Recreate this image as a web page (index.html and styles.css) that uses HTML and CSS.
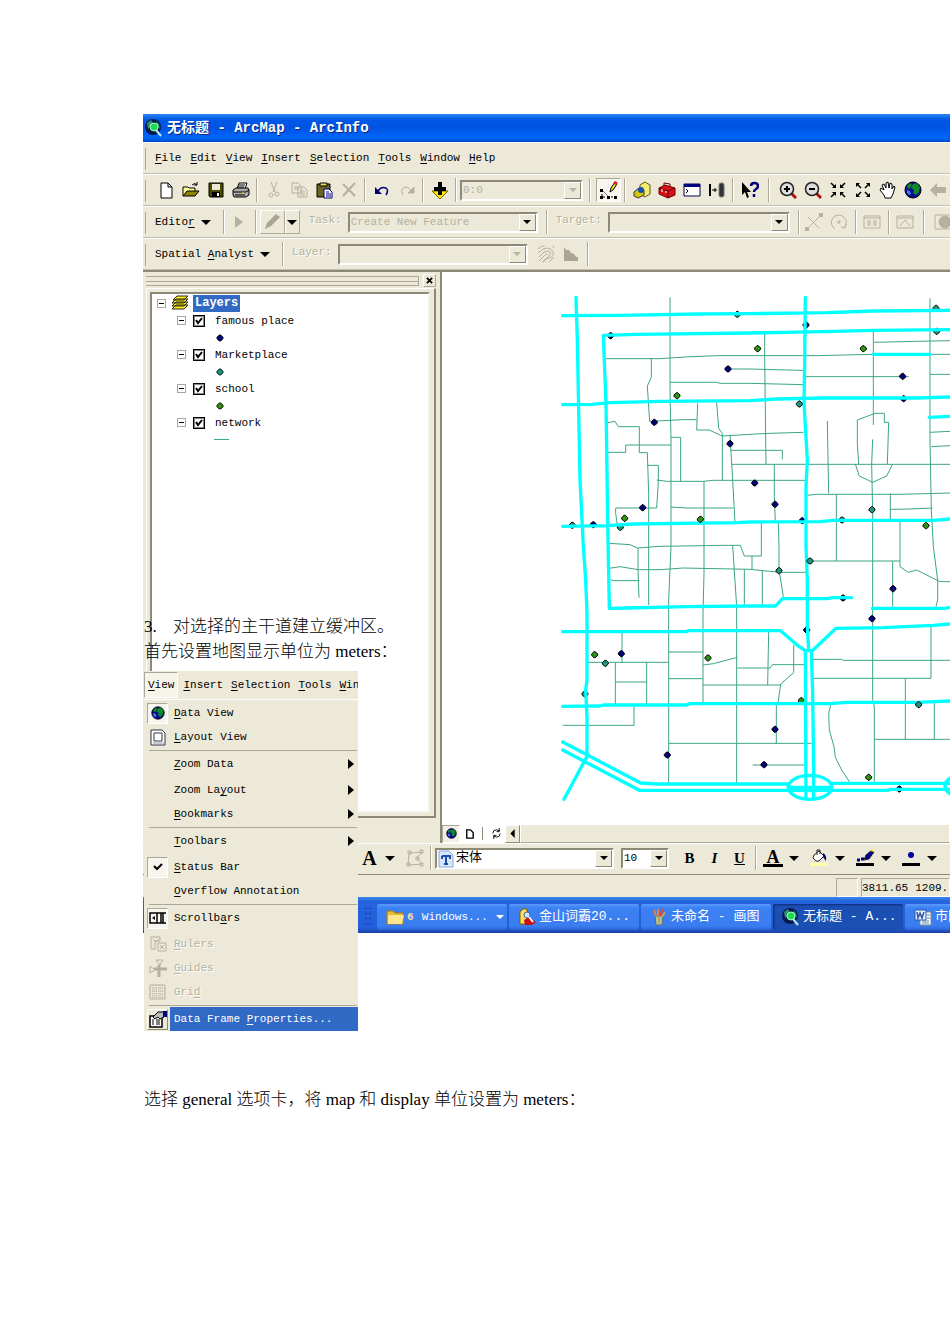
FILE: index.html
```html
<!DOCTYPE html>
<html lang="zh-CN">
<head>
<meta charset="utf-8">
<title>无标题 - ArcMap - ArcInfo</title>
<link rel="stylesheet" href="styles.css">
</head>
<body>
<svg class="defs" aria-hidden="true">
  <symbol id="globe" viewBox="0 0 18 18"><circle cx="9" cy="9" r="8" fill="#0a0a8c" stroke="#000"/><path d="M3 5l3-3 2 2-2 3-2 1zM9 3l4-1 3 4-1 5-3 3-3-2 1-3-3-2z" fill="#0c8a28"/><path d="M3 9l3 1 1 3-2 1-2-2z" fill="#3a7cf0"/></symbol>
  <symbol id="arcmap" viewBox="0 0 18 18"><circle cx="8" cy="8" r="8" fill="#061a4e"/><path d="M2 4l4-3 2 3-3 4-2 2zM11 2l3 3 1 5-3-2z" fill="#2b8f6a"/><circle cx="9" cy="8" r="4" fill="#1edc4e" stroke="#9fc" stroke-width="1"/><path d="M11 11l5 6" stroke="#bfe8f0" stroke-width="2"/></symbol>
  <symbol id="dia" viewBox="-12 -12 24 24" overflow="visible"><path d="M-2-9h4l7 7v4l-7 7h-4l-7-7v-4z"/></symbol>
</svg>
<article class="doc">
  <div class="stack">
    <figure class="shot">
      <header class="title"><svg class="i18"><use href="#arcmap"/></svg><span>无标题 - ArcMap - ArcInfo</span></header>

      <nav class="bar menubar">
        <button><u>F</u>ile</button><button><u>E</u>dit</button><button><u>V</u>iew</button><button><u>I</u>nsert</button><button><u>S</u>election</button><button><u>T</u>ools</button><button><u>W</u>indow</button><button><u>H</u>elp</button>
      </nav>

      <div class="bar tools">
        <button class="tb" aria-label="New"><svg viewBox="0 0 18 18"><path d="M4 2h7l4 4v11H4z" fill="#fff" stroke="#000"/><path d="M11 2v4h4" fill="none" stroke="#000"/></svg></button>
        <button class="tb" aria-label="Open"><svg viewBox="0 0 18 18"><path d="M1 15V6h5l1 1h6v3" fill="#ffff9c" stroke="#000"/><path d="M1 15l4-5h12l-4 5z" fill="#8c8400" stroke="#000"/><path d="M10 4q3-3 5 0m0-3v3h-3" fill="none" stroke="#000"/></svg></button>
        <button class="tb" aria-label="Save"><svg viewBox="0 0 18 18"><path d="M2 2h14v14H3l-1-1z" fill="#4a4a00" stroke="#000"/><path d="M5 3h8v6H5z" fill="#e8e8d8"/><path d="M5 11h8v5H5z" fill="#000"/><path d="M10 12h2v3h-2z" fill="#fff"/></svg></button>
        <button class="tb" aria-label="Print"><svg viewBox="0 0 18 18"><path d="M5 8l2-6h8l-2 6z" fill="#fff" stroke="#000"/><path d="M7 4h6M6 6h6" stroke="#000"/><path d="M1 9l3-2h12l1 2v5l-3 2H2l-1-2z" fill="#aaa" stroke="#000"/><path d="M1 11h13l3-2M3 14h10" stroke="#000" fill="none"/><path d="M10 12h2" stroke="#ee0"/></svg></button>
        <i class="sep"></i>
        <button class="tb off" aria-label="Cut"><svg viewBox="0 0 18 18"><path d="M6 1l4 10M12 1L8 11" /><circle cx="6" cy="14" r="2"/><circle cx="12" cy="13" r="2"/></svg></button>
        <button class="tb off" aria-label="Copy"><svg viewBox="0 0 18 18"><path d="M2 2h6l3 3v7H2zM4 6h5M4 8h5M8 6h6l3 3v7H8zM10 10h5M10 12h5M10 14h5"/></svg></button>
        <button class="tb" aria-label="Paste"><svg viewBox="0 0 18 18"><path d="M2 3h13v13H2z" fill="#6a6420" stroke="#000"/><path d="M5 2h7v3H5z" fill="#dd5" stroke="#000"/><path d="M9 8h5l3 3v6H9z" fill="#fff" stroke="#00007b"/><path d="M11 11h3M11 13h5M11 15h5" stroke="#00007b"/></svg></button>
        <button class="tb off" aria-label="Delete"><svg viewBox="0 0 18 18"><path d="M3 3l12 12M15 2L3 15" stroke-width="2"/></svg></button>
        <i class="sep"></i>
        <button class="tb" aria-label="Undo"><svg viewBox="0 0 18 18"><path d="M5 10q3-5 8-3 3 2 0 7" fill="none" stroke="#00007b" stroke-width="1.500"/><path d="M2 6v7h7z" fill="#00007b"/></svg></button>
        <button class="tb off" aria-label="Redo"><svg viewBox="0 0 18 18"><path d="M13 10Q9 4 5 7q-3 3 0 7" /><path d="M16 6v6h-6z" fill="#b4b1a0"/></svg></button>
        <i class="sep"></i>
        <button class="tb" aria-label="Add data"><svg viewBox="0 0 18 18"><path d="M1 10h16l-8 8z" fill="#ffe800" stroke="#776600"/><path d="M9 1v13M3 8h12" stroke="#000" stroke-width="4"/></svg></button>
        <i class="sep"></i>
        <span class="combo w123 off"><select aria-label="Scale" disabled><option>0:0</option></select><b></b></span>
        <i class="sep grip2"></i>
        <button class="tb pressed" aria-label="Editor toolbar"><svg viewBox="0 0 18 18"><path d="M2 9v7h14" fill="none" stroke="#000" stroke-dasharray="2 2"/><path d="M2 9l6 6" stroke="#777"/><path d="M0 8h3v3H0zM0 15h3v3H0zM7 15h3v3H7zM14 15h3v3h-3z" fill="#000"/><path d="M10 11l1-4 4-6 2 2-4 6z" fill="#f4e020" stroke="#000"/><path d="M14 1l3 2" stroke="#d22" stroke-width="3"/></svg></button>
        <i class="sep"></i>
        <button class="tb" aria-label="ArcCatalog"><svg viewBox="0 0 18 18"><path d="M7 4l5-3 5 3v9l-5 3-5-3z" fill="#f4ec70" stroke="#665c00"/><path d="M1 11l5-4 5 2v5l-6 3-4-2z" fill="#d7c500" stroke="#333"/><circle cx="8" cy="9" r="3" fill="#1550b0"/></svg></button>
        <button class="tb" aria-label="ArcToolbox"><svg viewBox="0 0 18 18"><path d="M1 7l6-3 10 3v7l-7 3-9-4z" fill="#d8111b" stroke="#700"/><path d="M1 7l9 3 7-3M10 10v7M6 5V2l6 1v3" fill="none" stroke="#600"/><path d="M4 8v3M8 10v2" stroke="#fff"/></svg></button>
        <button class="tb" aria-label="Command line"><svg viewBox="0 0 18 18"><path d="M1 3h16v12H1z" fill="#fff" stroke="#00005a"/><path d="M1 3h16v3H1z" fill="#00007b"/><path d="M3 8l2 2-2 2" fill="none" stroke="#000"/></svg></button>
        <button class="tb" aria-label="Snap"><svg viewBox="0 0 18 18"><path d="M2 3v12" stroke="#000" stroke-width="2"/><path d="M4 9h5M7 7v4" stroke="#000"/><rect x="11" y="2" width="5" height="14" rx="2" fill="#333" stroke="#777"/></svg></button>
        <i class="sep"></i>
        <button class="tb" aria-label="What's this"><svg viewBox="0 0 18 18"><path d="M1 1v13l3-3 2 6 2-1-2-5h4z" fill="#000"/><path d="M10 5q0-3 3.500-3T17 5q0 2-2 3t-2 3M13 13v3" fill="none" stroke="#00007b" stroke-width="2.500"/></svg></button>
        <i class="sep grip2"></i>
        <button class="tb" aria-label="Zoom in"><svg viewBox="0 0 18 18"><path d="M12 12l5 5" stroke="#b01010" stroke-width="3"/><circle cx="8" cy="8" r="6.500" fill="#ddd" stroke="#222" stroke-width="1.500"/><path d="M8 5v6M5 8h6" stroke="#000" stroke-width="2"/></svg></button>
        <button class="tb" aria-label="Zoom out"><svg viewBox="0 0 18 18"><path d="M12 12l5 5" stroke="#b01010" stroke-width="3"/><circle cx="8" cy="8" r="6.500" fill="#ddd" stroke="#222" stroke-width="1.500"/><path d="M5 8h6" stroke="#000" stroke-width="2"/></svg></button>
        <button class="tb" aria-label="Fixed zoom in"><svg viewBox="0 0 18 18"><path d="M2 2l4 4M16 2l-4 4M2 16l4-4M16 16l-4-4" stroke="#000" stroke-width="1.500"/><path d="M7 3v4H3zM11 3v4h4zM7 15v-4H3zM11 15v-4h4z"/></svg></button>
        <button class="tb" aria-label="Fixed zoom out"><svg viewBox="0 0 18 18"><path d="M3 3l4 4M15 3l-4 4M3 15l4-4M15 15l-4-4" stroke="#000" stroke-width="1.500"/><path d="M2 2h4L2 6zM16 2h-4l4 4zM2 16h4l-4-4zM16 16h-4l4-4z"/></svg></button>
        <button class="tb" aria-label="Pan"><svg viewBox="0 0 18 18"><path d="M6 17l-1-3-4-5 1-2 3 2L3 4l2-1 2 4V2l2-1 1 6 1-5 2 1v5l2-3 1 1-2 7-2 4z" fill="#fff" stroke="#000"/></svg></button>
        <button class="tb" aria-label="Full extent"><svg><use href="#globe"/></svg></button>
        <button class="tb" aria-label="Back"><svg viewBox="0 0 18 18"><path d="M1 9l7-7v4h9v6H8v4z" fill="#b4b1a0"/></svg></button>
      </div>

      <div class="bar tools">
        <button class="drop"><span>Edito<u>r</u></span><b class="tri"></b></button>
        <i class="sep wide"></i>
        <button class="tb off" aria-label="Edit tool"><svg viewBox="0 0 18 18"><path d="M5 3v12l8-6z" fill="#b4b1a0" stroke="none"/></svg></button>
        <i class="sep"></i>
        <button class="tb off raised" aria-label="Sketch"><svg viewBox="0 0 18 18"><path d="M2 16l2-6 9-9 4 3-9 9z" fill="#a8a595" stroke="none"/></svg></button><button class="raised thin" aria-label="Sketch menu"><b class="tri"></b></button>
        <label class="lab" for="task">Task:</label>
        <span class="combo w190 grey"><select id="task"><option>Create New Feature</option></select><b></b></span>
        <i class="sep wide2"></i>
        <label class="lab" for="target">Target:</label>
        <span class="combo w182 grey"><select id="target"><option></option></select><b></b></span>
        <i class="sep wide2"></i>
        <button class="tb off" aria-label="Split"><svg viewBox="0 0 18 18"><path d="M2 16L16 2M3 4l11 11"/><path d="M0 14h4v4H0zM14 0h4v4h-4z" fill="#b4b1a0" stroke="none"/></svg></button>
        <button class="tb off" aria-label="Rotate"><svg viewBox="0 0 18 18"><path d="M5 16a7.500 7.500 0 1 1 9-1M16 11l-1 4-4-1M8 8h2v2H8z"/></svg></button>
        <i class="sep"></i>
        <button class="tb off" aria-label="Attributes"><svg viewBox="0 0 18 18"><path d="M1 3h16v12H1zM1 5h16M4 8h4M10 8h4M4 10h4M10 10h4M4 12h4M10 12h4"/></svg></button>
        <i class="sep"></i>
        <button class="tb off" aria-label="Sketch properties"><svg viewBox="0 0 18 18"><path d="M1 3h16v12H1zM1 5h16M4 13l5-6 5 6"/></svg></button>
        <i class="sep grip2"></i>
        <button class="tb off" aria-label="Topology"><svg viewBox="0 0 18 18"><path d="M1 2h16v14H1z"/><circle cx="11" cy="9" r="6" fill="#b4b1a0"/></svg></button>
      </div>

      <div class="bar tools last">
        <button class="drop"><span>Spatial <u>A</u>nalyst</span><b class="tri"></b></button>
        <i class="sep wide"></i>
        <label class="lab near" for="layer">Layer:</label>
        <span class="combo w190 off"><select id="layer" disabled><option></option></select><b></b></span>
        <button class="tb off lead" aria-label="Contour"><svg viewBox="0 0 18 18"><path d="M1 4q4-4 7-3M1 8q5-5 9-5t6 4-4 6-5 4M2 12l5-5q4-2 6 0t-2 5l-6 5M2 16l6-6q2-2 3 0M12 17l5-5M16 1l1 2"/></svg></button>
        <button class="tb off" aria-label="Histogram"><svg viewBox="0 0 18 18"><path d="M2 16V2l2 3h3l2 3 3 1 2 3h2v4z" fill="#a8a595" stroke="none"/></svg></button>
        <i class="sep"></i>
      </div>

      <div class="work">
        <aside class="toc">
          <div class="tochead"><span class="rails"></span><button class="close" aria-label="Close"><svg viewBox="0 0 8 8"><path d="M1 1l6 6M7 1L1 7" stroke="#000" stroke-width="2"/></svg></button></div>
          <div class="tocframe"><div class="tree">
            <div class="node root"><i class="pm"></i><svg class="i18" viewBox="0 0 18 18"><g fill="#ffee10" stroke="#222"><path d="M1 15l4-4h12l-4 4zM1 12l4-4h12l-4 4zM1 9l4-4h12l-4 4zM2 6l4-4h11l-4 4z"/></g></svg><strong>Layers</strong></div>
            <div class="node"><i class="pm"></i><input type="checkbox" id="l1" checked><label for="l1">famous place</label></div>
            <div class="sym"><svg viewBox="-12 -12 24 24"><use href="#dia" x="-12" y="-12" width="24" height="24" class="n"/></svg></div>
            <div class="node"><i class="pm"></i><input type="checkbox" id="l2" checked><label for="l2">Marketplace</label></div>
            <div class="sym"><svg viewBox="-12 -12 24 24"><use href="#dia" x="-12" y="-12" width="24" height="24" class="t"/></svg></div>
            <div class="node"><i class="pm"></i><input type="checkbox" id="l3" checked><label for="l3">school</label></div>
            <div class="sym"><svg viewBox="-12 -12 24 24"><use href="#dia" x="-12" y="-12" width="24" height="24" class="g"/></svg></div>
            <div class="node"><i class="pm"></i><input type="checkbox" id="l4" checked><label for="l4">network</label></div>
            <div class="sym"><i class="line"></i></div>
          </div></div>
        </aside>
        <section class="mapcol">
          <div class="map">
            <svg class="mapsvg" viewBox="-324 -24 1524 1656">
              <g class="street">
                <path d="M360 52V330L363 480V800L356 960V1508M168 236H330L405 231L500 227H800L970 223M304 236V292L292 318L299 424L400 419H440M360 307H500L510 310H600M534 267H600L750 271H760M600 310L760 314M443 370L440 450H478L516 468L600 463L660 460L760 457M500 368L506 445L517 460V600M540 466L548 600L555 728M541 511H697V538M546 553H1200M172 428L195 424L205 440H268V518H292L296 640V975M175 517H227V495H363M292 556H325V602L320 684H197V700L202 735M320 600L350 604H460L490 601H766M363 472H392V604M363 681L410 684H550M462 604V880L459 1000V1270M178 790L240 794L262 804L330 799L520 796H571L583 828H634V725M178 865L210 860L265 869H330L400 864L600 868L690 877H768M264 804V870L267 953M182 898L190 902H268M548 796L560 980V1508M583 868V975M685 725L687 800V870L700 950M637 872V975M606 828V868M644 162V230L648 552M673 552V650L676 725"/>
                <path d="M764 290H1076M970 155V435M970 187L1060 185L1100 184L1200 182M1140 223H1200M1140 283H1200M1140 55V480L1144 690L1150 800L1163 900V960L1158 980M1140 457L1200 454M1144 500L1200 497M832 423L836 640M968 478L965 552L968 700V1258L973 1280V1505M922 420L975 400H1003V427H1016L1012 552M922 420V490L926 552M916 552L928 588L968 607L1010 588L1028 552M772 646L800 643H1050L1200 639M859 643V843M1021 640V720M1021 688L1080 687L1147 684M1050 725V860L1075 877L1100 870L1170 905H1200M780 843H1050M1028 843V980"/>
                <path d="M216 1057V1147M111 1147H356M196 1147V1272M290 1147V1272M196 1206H290M356 1116H459M356 1196H459M459 1155L490 1151L562 1132M562 1164H660L667 1154H763M459 1215H694M38 1336H252V1280M356 1390H785M656 1055L653 1215M731 1095V1178L692 1212L684 1270M679 1275V1390M608 1455H765M787 1138H875L880 1141H1200M787 1195H1143V1040M1066 1196V1378M1153 1267V1378M973 1378H1200M842 1275L836 1300L838 1350L852 1400L856 1432L875 1470L898 1505"/>
              </g>
              <g class="road">
                <path d="M78 52L82 180L90 600L100 800L107 900L111 1000V1200L107 1230L111 1310V1430L104 1442L42 1558M38 107L210 106L442 102L600 101L830 98L970 93L1200 91M905 953L850 953L830 956H697L677 978H600L410 980L235 984L178 985L174 780L168 370L160 166L260 163L600 159L705 157L850 154L970 151L1200 149M38 374L125 373L180 368L330 364L600 362L680 357L820 354H1100L1200 351M970 223H1140M1138 412L1200 409M766 52L764 250L762 370L772 540L768 620V800L772 900V1040L776 1110M38 739L170 737L250 732L560 728L600 726L810 725L850 721H1150L1200 717"/>
                <path d="M38 1055H410L415 1052H692L735 1090L765 1112H787L858 1045L1000 1043L1150 1036L1200 1032M967 985H1185L1200 982M766 1112L768 1555M784 1112L788 1240L791 1460V1555M38 1279L150 1278L160 1275H410L420 1271H840L890 1267H1100L1200 1263M38 1386L272 1509L320 1512H715M845 1510H1200M38 1410L268 1531H1015L1020 1528H1200M715 1522H845"/>
                <ellipse cx="780" cy="1522" rx="65" ry="36"/><ellipse cx="1250" cy="1518" rx="65" ry="36"/>
              </g>
              <g class="pts"></g>
            </svg>
          </div>
          <div class="hscroll">
            <button class="sq on" aria-label="Data view"><svg viewBox="0 0 18 18"><use href="#globe"/></svg></button>
            <button class="sq" aria-label="Layout view"><svg viewBox="0 0 10 12"><path d="M2 2h4l3 3v6H2z" fill="#fff" stroke="#000" stroke-width="1.500"/></svg></button>
            <i class="vbar"></i>
            <button class="sq" aria-label="Refresh"><svg viewBox="0 0 12 12"><path d="M2 6q0-4 4-4l3 1M9 0v4H6M10 6q0 4-4 4l-3-1M3 12V8h3" fill="none" stroke="#000"/></svg></button>
            <button class="sq up" aria-label="Scroll left"><svg viewBox="0 0 10 10"><path d="M7 1v8L3 5z"/></svg></button>
            <i class="track"></i>
          </div>
        </section>
      </div>

      <div class="draw">
        <button class="ch big">A</button><b class="tri"></b>
        <button class="tb off nodes" aria-label="Edit vertices"><svg viewBox="0 0 18 18"><path d="M3 4l13-1-5 6 5 6-14 1zM1 14h3v3H1zM2 2h3v3H2zM14 1h3v3h-3zM14 14h3v3h-3zM10 8h3v3h-3z"/></svg></button>
        <i class="sep"></i>
        <span class="combo w179"><svg class="i18" viewBox="0 0 18 18"><path d="M2 1h10l4 4v12H2z" fill="#d8e6fb" stroke="#88a8dc"/><path d="M5 6h8v3M9 6v8M7 14h4M5 6v3" fill="none" stroke="#1b4fa8" stroke-width="2"/></svg><select class="cjk" aria-label="Font"><option>宋体</option></select><b></b></span>
        <span class="combo w48"><select aria-label="Size"><option>10</option></select><b></b></span>
        <button class="ch first">B</button><button class="ch it">I</button><button class="ch un">U</button>
        <i class="sep"></i>
        <button class="ch ink">A</button><b class="tri"></b>
        <button class="col" aria-label="Fill color"><svg viewBox="0 0 20 20"><path d="M5 7l5-4 5 5-5 5h-3l-3-3z" fill="#fff" stroke="#222"/><path d="M8 7V2h3v4" fill="none" stroke="#222"/><path d="M14 5q4 2 3 8l-3-4z" fill="#00008c"/><path d="M1 15h18v3H1z" fill="#ffffa8"/></svg></button><b class="tri"></b>
        <button class="col" aria-label="Line color"><svg viewBox="0 0 20 20"><path d="M2 12h3M6 11h3" stroke="#00007b" stroke-width="3"/><path d="M9 12l2-5 6-5 2 2-5 7z" fill="#00008c" stroke="#223"/><path d="M15 3l3-2 1 3z" fill="#ee2"/><path d="M1 15h18v3H1z"/></svg></button><b class="tri"></b>
        <button class="col" aria-label="Marker color"><svg viewBox="0 0 20 20"><circle cx="10" cy="7" r="3" fill="#0000a0"/><path d="M1 15h18v3H1z"/></svg></button><b class="tri"></b>
      </div>

      <div class="status"><span class="cell small"></span><span class="cell"><span>3811.65</span><span>1209.</span></span></div>

      <div class="taskbar">
        <i class="dots"></i>
        <button class="task"><svg class="i18" viewBox="0 0 18 18"><path d="M1 3h6l2 2h8v11H1z" fill="#e8b83c" stroke="#b07c10"/><path d="M2 7h16l-2 9H2z" fill="#ffe68c"/></svg><em>6</em><span class="lat">Windows...</span><b class="tri white"></b></button>
        <button class="task"><svg class="i18" viewBox="0 0 18 18"><path d="M2 16V4l3-3h4v15z" fill="#ffe060" stroke="#8a5a00"/><path d="M6 12l5-3 7 5-4 3H7z" fill="#d01010"/><circle cx="9" cy="7" r="3" fill="#cfe6ff" stroke="#469"/><path d="M11 9l4 5" stroke="#fff" stroke-width="2"/></svg><span>金山词霸20...</span></button>
        <button class="task"><svg class="i18" viewBox="0 0 18 18"><path d="M5 8h8l-1 9H6z" fill="#a9c7a0" stroke="#567"/><path d="M6 8L4 2M8 8V1" stroke="#e8803a" stroke-width="2"/><path d="M10 8l3-7" stroke="#d44" stroke-width="2"/><path d="M12 9l3-5M9 9v6" stroke="#c8a050" stroke-width="2"/></svg><span>未命名 - 画图</span></button>
        <button class="task active"><svg class="i18"><use href="#arcmap"/></svg><span>无标题 - A...</span></button>
        <button class="task"><svg class="i18" viewBox="0 0 18 18"><path d="M6 4h11v13H6z" fill="#fff" stroke="#789"/><path d="M8 13h7M8 15h7M13 7h3M13 10h3" stroke="#58a"/><path d="M1 2h11v10H1z" fill="#e8f0ff" stroke="#2a56a8"/><path d="M3 4l1 6 2-5 2 5 2-6" fill="none" stroke="#2a56a8" stroke-width="1.500"/></svg><span>市区</span></button>
      </div>
    </figure>

    <div class="over">
      <p class="num"><span>3.</span>对选择的主干道建立缓冲区。</p>
      <p>首先设置地图显示单位为 meters：</p>
      <div class="popup">
        <div class="pmenu"><button class="sel"><u>V</u>iew</button><button><u>I</u>nsert</button><button><u>S</u>election</button><button><u>T</u>ools</button><button><u>W</u>in</button></div>
        <div class="items">
          <button class="mi"><span class="ic chk"><svg class="small-globe"><use href="#globe"/></svg></span><span><u>D</u>ata View</span></button>
          <button class="mi"><span class="ic"><svg viewBox="0 0 18 18"><path d="M2 2h11l3 3v12H2z" fill="#fff" stroke="#334"/><path d="M5 5h8v8H5z" fill="#fff" stroke="#334"/><path d="M4 15h11" stroke="#99a"/></svg></span><span><u>L</u>ayout View</span></button>
          <hr>
          <button class="mi sp"><span class="ic"></span><span><u>Z</u>oom Data</span><i class="sub"></i></button>
          <button class="mi"><span class="ic"></span><span>Zoom La<u>y</u>out</span><i class="sub"></i></button>
          <button class="mi"><span class="ic"></span><span><u>B</u>ookmarks</span><i class="sub"></i></button>
          <hr>
          <button class="mi sp"><span class="ic"></span><span><u>T</u>oolbars</span><i class="sub"></i></button>
          <button class="mi"><span class="ic chk"><svg viewBox="0 0 18 18"><path d="M5 8l3 3 5-5" fill="none" stroke="#000" stroke-width="2"/></svg></span><span><u>S</u>tatus Bar</span></button>
          <button class="mi"><span class="ic"></span><span><u>O</u>verflow Annotation</span></button>
          <hr>
          <button class="mi sp"><span class="ic chk"><svg viewBox="0 0 18 18"><path d="M1 4h7v10H1zM8 4h4v10H8zM14 4v10M12 4h5M12 14h5" fill="none" stroke="#000" stroke-width="1.500"/><path d="M6 7v4L3 9z"/></svg></span><span>Scrollb<u>a</u>rs</span></button>
          <button class="mi dis"><span class="ic"><svg viewBox="0 0 18 18"><path d="M2 2h9v4H6v8H2zM4 4l3 3 3-3M9 8h8v8H9zM11 10l4 4M15 10l-4 4"/></svg></span><span><u>R</u>ulers</span></button>
          <button class="mi dis"><span class="ic"><svg viewBox="0 0 18 18"><path d="M7 1h7l-3 5zM1 7v7l5-3z"/><path d="M10 6v12M5 10h13" stroke-width="3"/></svg></span><span><u>G</u>uides</span></button>
          <button class="mi dis"><span class="ic"><svg viewBox="0 0 18 18"><path d="M1 2h15v14H1z"/><path d="M4 2v14M7 2v14M10 2v14M13 2v14M1 5h15M1 8h15M1 11h15M1 14h15" stroke-dasharray="1 1"/></svg></span><span>Gri<u>d</u></span></button>
          <hr>
          <button class="mi hot"><span class="ic"><svg viewBox="0 0 18 18"><path d="M1 6h12v11H1z" fill="#fff" stroke="#000" stroke-width="1.500"/><path d="M3 10h2M7 10h4M3 12h2M7 12h4M3 14h2M7 14h4" stroke="#000"/><path d="M4 7l5-5h6v5l-4 2-2-2-3 2z" fill="#bbb" stroke="#000"/><path d="M14 1h4v6h-4z" fill="#00007b"/></svg></span><span>Data Frame <u>P</u>roperties...</span></button>
        </div>
      </div>
    </div>
  </div>
  <p class="after">选择 general 选项卡，将 map 和 display 单位设置为 meters：</p>
</article>
<script src="map.js"></script>
</body>
</html>
```
FILE: map.js
```js
// Point features: under = partly covered by a main road.
var points = {
  n: [[534,267],[313,427],[540,491],[278,683],[1058,289],[614,609],[675,673],[214,1121],[352,1425],[1029,926],[966,1016],[675,1348],[642,1454]],
  t: [[748,372],[966,689],[166,1150],[687,872],[780,843],[1106,1274]],
  g: [[381,347],[224,715],[451,718],[623,206],[940,206],[1128,737],[134,1124],[474,1134],[956,1492]]
};
var under = {
  n: [[182,167],[130,734],[768,135],[1061,356],[879,954],[770,1050],[1048,1527],[757,722]],
  t: [[562,103],[67,736],[211,742],[1158,85],[1160,154],[876,720],[105,1242]],
  g: [[754,1262]]
};
var svg = document.querySelector('.mapsvg');
function draw(set, parent) {
  Object.keys(set).forEach(function (k) {
    set[k].forEach(function (p) {
      var u = document.createElementNS('http://www.w3.org/2000/svg', 'use');
      u.setAttribute('href', '#dia');
      u.setAttribute('class', k);
      u.setAttribute('x', p[0] - 12);
      u.setAttribute('y', p[1] - 12);
      u.setAttribute('width', 24);
      u.setAttribute('height', 24);
      parent.appendChild(u);
    });
  });
}
draw(under, svg.querySelector('.street'));
draw(points, svg.querySelector('.pts'));
```
FILE: styles.css
```css
:root {
  --face: #ece9d8;
  --dark: #8c8976;
  --mid: #aca899;
  --dis: #b4b1a0;
  --hot: #316ac5;
}
* { box-sizing: border-box; }
body { margin: 0; background: #fff; color: #000; font: 11px/16px "Liberation Mono", "Noto Sans CJK SC", monospace; }
button { font: inherit; color: inherit; background: none; border: 0; padding: 0; margin: 0; display: flex; align-items: center; justify-content: center; white-space: pre; flex: none; }
u { text-underline-offset: 2px; }
svg { display: block; flex: none; }
.defs { width: 0; height: 0; position: absolute; }
.i18 { width: 18px; height: 18px; }
.doc { padding: 114px 0 0 143px; overflow: hidden; }
.stack { display: grid; grid-template-columns: minmax(0, 1fr); }
.shot, .over { grid-area: 1 / 1; }
.shot { margin: 0; background: var(--face); overflow: hidden; align-self: start; }

.title { height: 28px; display: flex; align-items: center; gap: 4px; padding-left: 2px; color: #fff; font-size: 14px; font-weight: bold; white-space: pre; text-shadow: 1px 1px #0a2a80; background: linear-gradient(#2a86f4, #0058e6 20%, #0054e3 50%, #0066ff 85%, #0048c8); }

.bar { height: 32px; display: flex; align-items: center; border-top: 1px solid #fff; border-bottom: 1px solid #c3bfae; padding-left: 10px; background: linear-gradient(var(--mid), var(--mid)) 2px 5px / 1px 22px no-repeat; }
.menubar { gap: 9px; padding-left: 12px; }
.tb { width: 25px; height: 24px; }
.tb svg { width: 18px; height: 18px; }
.off svg, .dis svg { fill: none; stroke: var(--dis); }
.sep { width: 8px; height: 24px; flex: none; background: linear-gradient(90deg, var(--mid) 50%, #fff 50%) center / 2px 24px no-repeat; }
.grip2 { width: 13px; }
.wide { width: 26px; }
.wide2 { width: 18px; }
.pressed, .chk { background: #f6f5ee; border: 1px solid; border-color: var(--mid) #fff #fff var(--mid); }
.raised { height: 24px; border: 1px solid; border-color: #fff var(--mid) var(--mid) #fff; }
.thin { width: 15px; }
.tri { width: 0; height: 0; flex: none; border: 5px solid transparent; border-top-color: #000; border-bottom: 0; }
.drop { gap: 6px; padding-left: 2px; }
.wide + .tb { margin-left: -10px; }
.lab { color: var(--dis); text-shadow: 1px 1px #fff; margin: 0 6px 4px 9px; white-space: pre; flex: none; }
.wide2 + .lab { margin-left: 0; }
.wide2 + .tb { margin-left: -6px; }
.lab.near { margin-left: -4px; }
.lead { margin-left: 6px; }

.combo { height: 21px; flex: none; display: flex; align-items: stretch; background: #fff; border: 2px solid; border-color: var(--dark) #fff #fff var(--dark); }
.combo select { appearance: none; flex: 1; min-width: 0; border: 0; margin: 0; padding: 0 1px; background: none; font: inherit; color: #000; opacity: 1; }
.combo b { width: 17px; flex: none; background: var(--face); border: 1px solid; border-color: #fff var(--dark) var(--dark) #fff; display: grid; place-items: center; }
.combo b::after { content: ""; border: 4px solid transparent; border-top-color: #000; border-bottom: 0; }
.combo.off, .combo.grey { background: var(--face); }
.combo.off select, .combo.grey select { color: var(--dis); }
.combo.off b::after { border-top-color: var(--dis); }
.combo .cjk { font-size: 13px; }
.w123 { width: 123px; }
.w190 { width: 190px; }
.w182 { width: 182px; }
.w179 { width: 179px; }
.w48 { width: 48px; }

.work { height: 573px; display: flex; border-top: 2px solid var(--dark); }
.toc { width: 299px; flex: none; display: flex; flex-direction: column; padding: 1px 4px 25px 3px; border-right: 2px solid var(--dark); }
.tochead { height: 15px; display: flex; align-items: center; gap: 4px; flex: none; }
.rails { flex: 1; height: 10px; border: 1px solid var(--mid); border-width: 1px 1px 1px 0; background: linear-gradient(var(--mid), var(--mid)) 0 4px / 100% 1px no-repeat; }
.close { width: 13px; height: 13px; border: 1px solid; border-color: #fff var(--mid) var(--mid) #fff; }
.close svg { width: 7px; height: 7px; }
.tocframe { flex: 1; display: flex; border: 1px solid; border-color: #fff var(--dark) var(--dark) #fff; border-right-width: 2px; border-bottom-width: 2px; padding: 3px 4px 3px 3px; }
.tree { flex: 1; background: #fff; border: 2px solid; border-color: var(--dark) #f4f2e8 #f4f2e8 var(--dark); padding-left: 5px; }
.node { height: 17px; display: flex; align-items: center; gap: 7px; padding-left: 20px; }
.root { padding-left: 0; gap: 5px; height: 18px; }
.root strong { background: var(--hot); color: #fff; padding: 0 2px; margin-left: -1px; font-size: 12px; height: 17px; }
.pm { width: 9px; height: 9px; border: 1px solid var(--mid); background: linear-gradient(#000, #000) center / 5px 1px no-repeat; }
.node input { appearance: none; width: 12px; height: 12px; margin: 0; border: 1px solid #000; outline: 1px solid #888; outline-offset: -2px; background: url("data:image/svg+xml,%3Csvg xmlns='http://www.w3.org/2000/svg' viewBox='0 0 10 10'%3E%3Cpath d='M2 4l2 3 4-5' fill='none' stroke='%23000' stroke-width='2'/%3E%3C/svg%3E"); }
.node label { margin-left: 3px; }
.sym { height: 17px; padding-left: 57px; display: flex; align-items: center; }
.sym svg { width: 8px; height: 8px; margin-left: 2px; }
.line { width: 15px; height: 1px; background: #34b08c; }

.mapcol { flex: 1; min-width: 0; display: flex; flex-direction: column; }
.map { flex: 1; min-height: 0; background: #fff; overflow: hidden; }
.mapsvg { width: 508px; height: 552px; }
.street { fill: none; stroke: #3aa587; stroke-width: 3; }
.road { fill: none; stroke: #00ffff; stroke-width: 10; stroke-linecap: round; stroke-linejoin: round; }
.n, .t, .g { stroke: #000; stroke-width: 3; }
.n { fill: #00007b; }
.t { fill: #1f9580; }
.g { fill: #2c9410; }
.hscroll { height: 19px; display: flex; align-items: center; background: #fff; }
.sq { width: 18px; height: 18px; }
.sq svg { width: 11px; height: 11px; }
.sq.on { background: #f2f0e6; border: 1px solid; border-color: var(--mid) #fff #fff var(--mid); }
.vbar { width: 1px; height: 13px; background: var(--dark); margin: 0 4px; }
.sq.up { width: 15px; background: var(--face); border: 1px solid; border-color: #fff var(--dark) var(--dark) #fff; }
.track { flex: 1; height: 19px; background: var(--face); border: 1px solid; border-color: #fff #fff var(--mid); }

.draw { height: 32px; display: flex; align-items: center; padding: 0 0 2px 215px; border-top: 1px solid #fff; border-bottom: 1px solid var(--dark); white-space: nowrap; overflow: hidden; }
.ch { width: 25px; height: 24px; font: bold 15px/18px "Liberation Serif", serif; }
.big { width: 23px; font-size: 20px; }
.big + .tri { margin: 0 4px; }
.nodes { margin-left: 3px; }
.w48 { margin-left: 7px; }
.first { margin-left: 8px; }
.it { font-style: italic; }
.un { text-decoration: underline; }
.ink { width: 20px; height: 18px; border-bottom: 3px solid #000; margin-left: 3px; font-size: 18px; }
.col { width: 20px; margin-left: 10px; }
.col svg { width: 20px; height: 20px; }
.ink + .tri, .col + .tri { margin-left: 6px; }
.status { height: 22px; display: flex; justify-content: flex-end; gap: 3px; padding-top: 3px; }
.cell { width: 89px; display: flex; gap: 7px; border: 1px solid; border-color: var(--mid) #fff #fff var(--mid); line-height: 18px; white-space: pre; }
.small { width: 22px; }

.taskbar { height: 36px; display: flex; align-items: center; gap: 2px; padding: 3px 0 0 221px; overflow: hidden; color: #fff; font-size: 13px; background: linear-gradient(#3a88ee, #2663dc 12%, #245edb 85%, #1941a5); }
.dots { width: 9px; height: 22px; margin-right: 2px; flex: none; background: radial-gradient(circle, #123d9c 1px, transparent 1px) 0 0 / 4px 5px; }
.task { width: 130px; height: 26px; justify-content: flex-start; gap: 3px; padding-left: 9px; border-radius: 2px; background: linear-gradient(#5a9bfa, #3c81f3 15%, #3a7df0 85%, #2c63d8); overflow: hidden; }
.task.active { background: #1c4fb4; box-shadow: inset 1px 1px 2px #0c2c78; }
.task em { font-style: normal; font-weight: bold; font-size: 11px; color: #ffd8a0; }
.lat { font-size: 11px; flex: 1; }
.white { border-width: 4px 4px 0; border-top-color: #fff; margin-right: 3px; }

.over { padding: 500px 0 0 1px; justify-self: start; position: relative; font: 300 17px/25px "Liberation Serif", "Noto Sans CJK SC", serif; }
.over p, .after { margin: 0; white-space: nowrap; }
.num span { display: inline-block; width: 29px; }
.popup { width: 214px; margin-top: 7px; background: var(--face); overflow: hidden; font: 11px/16px "Liberation Mono", monospace; }
.pmenu { height: 28px; display: flex; align-items: center; gap: 8px; }
.sel { height: 26px; padding: 0 3px; background: #f6f4ea; border: 1px solid; border-color: var(--mid) #fff #fff var(--mid); margin-right: -3px; }
.items { padding: 1px 0 0 3px; border-top: 1px solid #fff; }
.mi { width: 100%; height: 24px; justify-content: flex-start; }
.sp { margin-bottom: 2px; }
.ic { width: 21px; height: 21px; margin-right: 6px; display: grid; place-items: center; flex: none; }
.ic svg { width: 18px; height: 18px; }
.ic .small-globe { width: 14px; height: 14px; }
.items hr { height: 1px; border: 0; margin: 1px 1px 1px 2px; background: var(--mid); }
.sub { margin-left: auto; margin-right: 4px; border: 5px solid transparent; border-left: 6px solid #000; border-right: 0; }
.dis { color: var(--dis); text-shadow: 1px 1px #fff; }
.hot { color: #fff; background: linear-gradient(90deg, var(--face) 23px, var(--hot) 23px); }
.hot .ic { border: 1px solid; border-color: #fff var(--dark) var(--dark) #fff; }
.after { padding: 56px 0 60px 1px; font: 300 17px/25px "Liberation Serif", "Noto Sans CJK SC", serif; }
```
